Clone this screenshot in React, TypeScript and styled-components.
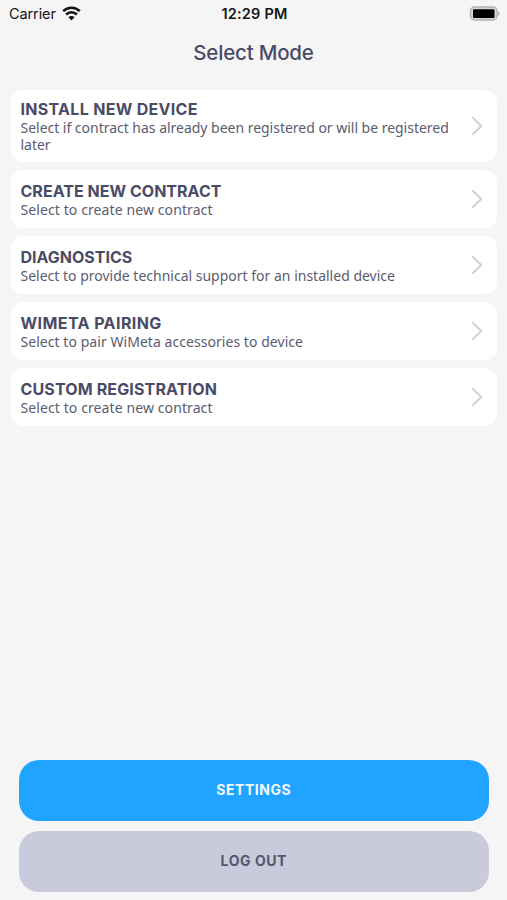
import React from "react";
import styled, { createGlobalStyle } from "styled-components";

const GlobalStyle = createGlobalStyle`
  * { box-sizing: border-box; }
  html, body { margin: 0; padding: 0; background: #f5f5f5; }
  button { font: inherit; border: 0; margin: 0; cursor: pointer; }
`;

const Screen = styled.div`
  display: flex;
  flex-direction: column;
  width: 100%;
  height: 100vh;
  min-height: 900px;
  background: #f5f5f5;
  color: #4a4b66;
  font-family: Inter, "Liberation Sans", sans-serif;
`;

const StatusBar = styled.header`
  display: grid;
  grid-template-columns: 1fr auto 1fr;
  align-items: center;
  height: 28px;
  padding: 0 7px 0 9px;
  color: #161616;
  font-size: 14.5px;
  line-height: 28px;
`;

const Carrier = styled.div`
  display: flex;
  align-items: center;
  gap: 6px;
  letter-spacing: -0.1px;
  svg { margin-bottom: 2px; }
`;

const Clock = styled.time`
  font-size: 14.5px;
  font-weight: 600;
  letter-spacing: 0.2px;
`;

const BatterySlot = styled.div`
  display: flex;
  justify-content: flex-end;
  margin-top: -2px;
`;

const Title = styled.h1`
  margin: 0;
  height: 62px;
  font-size: 20.5px;
  font-weight: 500;
  line-height: 49px;
  letter-spacing: -0.2px;
  text-align: center;
`;

const ModeList = styled.nav`
  display: flex;
  flex-direction: column;
  gap: 8px;
  padding: 0 10px 0 11px;
`;

const ModeCard = styled.button`
  display: flex;
  align-items: center;
  justify-content: space-between;
  min-height: 58px;
  padding: 10px 14px 9px 9.5px;
  border-radius: 12px;
  background: #fff;
  color: inherit;
  text-align: left;
  svg { margin-bottom: 2px; }
`;

const ModeText = styled.span`
  display: flex;
  flex-direction: column;
  width: 436px;
`;

const ModeName = styled.span<{ $tracking: number }>`
  height: 19px;
  font-size: 16px;
  font-weight: 700;
  line-height: 19px;
  letter-spacing: ${(p) => p.$tracking}px;
  white-space: nowrap;
`;

const ModeHint = styled.span<{ $tracking: number }>`
  color: #5b5c70;
  font-family: "Noto Sans", sans-serif;
  font-size: 14px;
  line-height: 17px;
  letter-spacing: ${(p) => p.$tracking}px;
  white-space: pre-line;
`;

const Actions = styled.footer`
  display: flex;
  flex-direction: column;
  gap: 10px;
  margin-top: auto;
  padding: 0 18.5px 8.5px 19px;
`;

const ActionButton = styled.button<{ $primary?: boolean }>`
  height: 61px;
  padding: 0 0 1px;
  border-radius: 20px;
  background: ${(p) => (p.$primary ? "#20a4ff" : "#c9cbdd")};
  color: ${(p) => (p.$primary ? "#f4fbff" : "#54566b")};
  && { font-size: 14px; font-weight: 650; letter-spacing: 0.55px; }
`;

const WifiIcon = () => (
  <svg width="19" height="15" viewBox="0 0 19 15" fill="none" stroke="#111" strokeWidth="2.6">
    <path d="M1.2 5.2a11.8 11.8 0 0 1 16.6 0" />
    <path d="M4.1 8.5a7.7 7.7 0 0 1 10.8 0" />
    <path d="M9.5 14.4 6.4 11.2a4.4 4.4 0 0 1 6.2 0Z" fill="#111" stroke="none" />
  </svg>
);

const BatteryIcon = () => (
  <svg width="31" height="15" viewBox="0 0 31 15">
    <rect x="1.5" y="1" width="26.5" height="13" rx="4" fill="#d7d7d7" stroke="#b2b2b2" strokeWidth="1.4" />
    <rect x="4" y="3.2" width="21.5" height="8.8" rx="1" fill="#000" />
    <path d="M29 5.2c2.2.8 2.2 3.8 0 4.6Z" fill="#aaa" />
  </svg>
);

const Chevron = () => (
  <svg width="12" height="20" viewBox="0 0 12 20" fill="none" stroke="#ced0de" strokeWidth="1.9">
    <path d="m1.3 1.2 9 8.8-9 8.8" />
  </svg>
);

const modes = [
  {
    name: "INSTALL NEW DEVICE",
    hint: "Select if contract has already been registered or will be registered\nlater",
    nameTracking: 0.3,
    hintTracking: -0.02,
  },
  { name: "CREATE NEW CONTRACT", hint: "Select to create new contract", nameTracking: 0.03, hintTracking: 0.1 },
  {
    name: "DIAGNOSTICS",
    hint: "Select to provide technical support for an installed device",
    nameTracking: 0,
    hintTracking: 0,
  },
  {
    name: "WIMETA PAIRING",
    hint: "Select to pair WiMeta accessories to device",
    nameTracking: 0.42,
    hintTracking: 0.05,
  },
  { name: "CUSTOM REGISTRATION", hint: "Select to create new contract", nameTracking: 0.14, hintTracking: 0.1 },
];

export default function App() {
  return (
    <Screen>
      <GlobalStyle />
      <StatusBar>
        <Carrier>
          Carrier
          <WifiIcon />
        </Carrier>
        <Clock>12:29 PM</Clock>
        <BatterySlot>
          <BatteryIcon />
        </BatterySlot>
      </StatusBar>
      <Title>Select Mode</Title>
      <ModeList>
        {modes.map((mode) => (
          <ModeCard key={mode.name}>
            <ModeText>
              <ModeName $tracking={mode.nameTracking}>{mode.name}</ModeName>
              <ModeHint $tracking={mode.hintTracking}>{mode.hint}</ModeHint>
            </ModeText>
            <Chevron />
          </ModeCard>
        ))}
      </ModeList>
      <Actions>
        <ActionButton $primary>SETTINGS</ActionButton>
        <ActionButton>LOG OUT</ActionButton>
      </Actions>
    </Screen>
  );
}
